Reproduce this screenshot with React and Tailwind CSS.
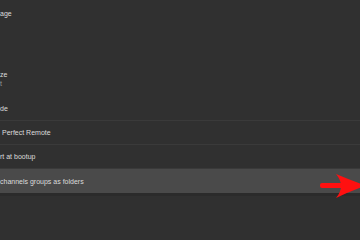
export default function App() {
  return (
    <div
      className="relative w-[360px] h-[240px] overflow-hidden bg-[#303030] text-[#dcdcdc] text-[7px] leading-none"
      style={{ fontFamily: '"Liberation Sans", Arial, sans-serif' }}
    >
      <div className="flex flex-col">
        <div className="h-[26px] flex items-center">
          <span>age</span>
        </div>
        <div className="h-[35px]" />
        <div className="h-[36px] flex flex-col justify-center gap-[2px]">
          <span>ze</span>
          <span className="text-[#9a9a9a]">t</span>
        </div>
        <div className="h-[24px] flex items-center border-b border-[#3a3a3a]">
          <span>de</span>
        </div>
        <div className="h-[24px] flex items-center pl-[2px] border-b border-[#3a3a3a]">
          <span>Perfect Remote</span>
        </div>
        <div className="h-[24px] flex items-center border-b border-[#3a3a3a]">
          <span>rt at bootup</span>
        </div>
        <div className="h-[24px] flex items-center bg-[#4a4a4a]">
          <span>channels groups as folders</span>
        </div>
        <div className="h-[3px] bg-[#2b2b2b]" />
      </div>
      <svg
        className="absolute left-0 top-0"
        width="360"
        height="240"
        viewBox="0 0 360 240"
      >
        <rect x="320" y="183" width="24" height="5" rx="2" fill="#ff1010" />
        <path
          d="M336 174 Q350 180 366 185.5 Q350 191 336 198 Q346 186 336 174 Z"
          fill="#ff1010"
        />
      </svg>
    </div>
  );
}
